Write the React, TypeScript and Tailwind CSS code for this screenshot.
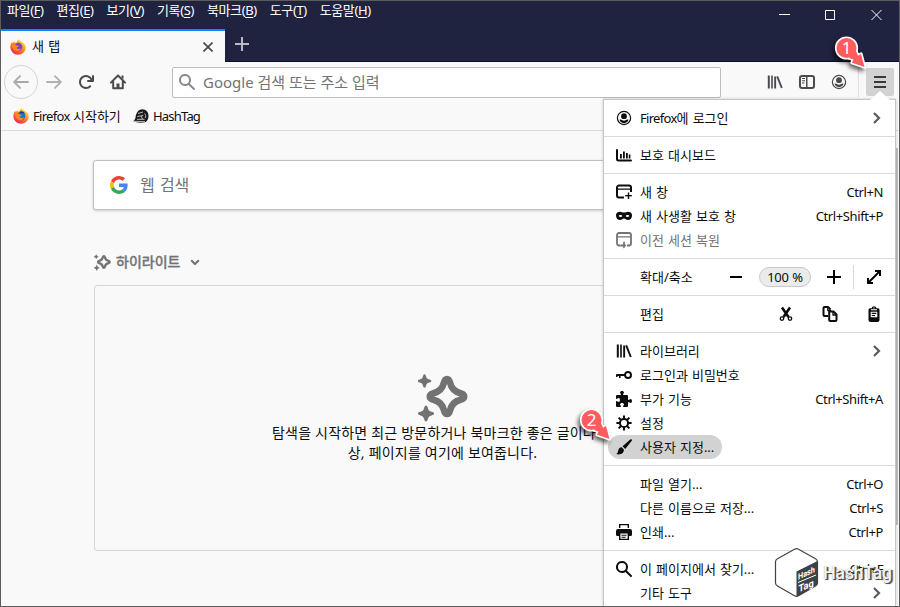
import type { ReactNode } from "react";
import clsx from "clsx";

function Icon({ children, className, size = 16, box = 16 }: { children: ReactNode; className?: string; size?: number; box?: number }) {
  return (
    <svg width={size} height={size} viewBox={`0 0 ${box} ${box}`} fill="currentColor" className={clsx("shrink-0 overflow-visible", className)}>
      {children}
    </svg>
  );
}

const arrow =
  "M15 7.1H3.4l4.3-4.4A.9.9 0 0 0 6.4 1.4l-6 6a.9.9 0 0 0 0 1.2l6 6a.9.9 0 0 0 1.3-1.3L3.4 8.9H15a.9.9 0 0 0 0-1.8z";

const library = (
  <>
    <path d="M.8 1.5h2v13h-2zM4.2 1.5h1.6v13H4.2zM7.2 2.5h1.9v12H7.2z" />
    <path d="M10.2 2.3 14.8 14" stroke="currentColor" strokeWidth="1.9" />
  </>
);

const account = (
  <>
    <circle cx="8" cy="8" r="6.6" fill="none" stroke="currentColor" strokeWidth="1.2" />
    <circle cx="8" cy="6.2" r="2.9" />
    <path d="M3.5 9.6h1.6C6 11 10 11 10.9 9.6h1.6c-.3 2-2 3.6-4.5 3.6S3.8 11.600 3.5 9.6z" />
  </>
);

const search = (
  <path d="M15.707 14.293l-4.822-4.822a6.019 6.019 0 1 0-1.414 1.414l4.822 4.822a1 1 0 0 0 1.414-1.414zM6 10a4 4 0 1 1 4-4 4 4 0 0 1-4 4z" />
);

const chart = (
  <>
    <path d="M1 3V12a1.500 1.500 0 0 0 1.500 1.500H15" fill="none" stroke="currentColor" strokeWidth="2" strokeLinecap="round" />
    <path d="M4 7h1.800v4.500H4zM7 4.500h1.800v7H7zM10 6h1.800v5.500H10zM12.800 7.500h1.600v4h-1.600z" />
  </>
);

const newWindow = (
  <>
    <path d="M8 13.500H3A2 2 0 0 1 1 11.500V3.500a2 2 0 0 1 2-2h10a2 2 0 0 1 2 2V8" fill="none" stroke="currentColor" strokeWidth="2" />
    <path d="M1 4.500h14v1.300H1zM11.800 8.500h1.400v6.500h-1.400z" />
    <path d="M9.200 11h6.600v1.400H9.200z" />
  </>
);

const mask = (
  <path
    fillRule="evenodd"
    d="M4 3.800c1.600 0 2.600.8 4 .8s2.400-.8 4-.8c2.500 0 4 1.100 4 3.700 0 2.500-1.500 4.500-4 4.500-2 0-2.800-1.600-4-1.600S6 12 4 12c-2.500 0-4-2-4-4.500 0-2.600 1.500-3.700 4-3.700zm.5 3.100c-1.100 0-1.700.5-1.900 1.100.5.6 1.200 1 2 1S6 8.600 6.400 8c-.4-.6-1-1.100-1.900-1.100zm7 0c-.9 0-1.500.5-1.900 1.100.4.6 1 1 1.800 1s1.500-.4 2-1c-.2-.6-.8-1.100-1.900-1.100z"
  />
);

const restore = (
  <>
    <path d="M4.500 13.500H3A2 2 0 0 1 1 11.500V3a2 2 0 0 1 2-2h10a2 2 0 0 1 2 2v8.500a2 2 0 0 1-2 2h-2" fill="none" stroke="currentColor" strokeWidth="1.800" />
    <path d="M1 4.300h14v1.200H1zM7.300 9.500h1.500v6H7.300z" />
    <path d="M4.500 12.500h2.800v-2l3 3-3 3v-2H4.500z" />
  </>
);

const key = (
  <path
    fillRule="evenodd"
    d="M12 4a4 4 0 0 0-3.900 3H1a1 1 0 0 0-1 1v2h1.500V9H3v2h1.600V9H8.100A4 4 0 1 0 12 4zm0 2a2 2 0 1 1 0 4 2 2 0 0 1 0-4z"
  />
);

const addons = (
  <path d="M14.5 8c-.971 0-1 1-1.75 1a.765.765 0 0 1-.75-.75V5a1 1 0 0 0-1-1H7.75A.765.765 0 0 1 7 3.25c0-.75 1-.779 1-1.75C8 .635 7.1 0 6 0S4 .635 4 1.5c0 .971 1 1 1 1.75a.765.765 0 0 1-.75.75H1a1 1 0 0 0-1 1v2.250A.765.765 0 0 0 .75 8c.75 0 .779-1 1.75-1C3.365 7 4 7.9 4 9s-.635 2-1.5 2c-.971 0-1-1-1.75-1a.765.765 0 0 0-.75.75V15a1 1 0 0 0 1 1h3.250a.765.765 0 0 0 .75-.75c0-.75-1-.779-1-1.75 0-.865.9-1.5 2-1.5s2 .635 2 1.5c0 .971-1 1-1 1.75a.765.765 0 0 0 .75.75H11a1 1 0 0 0 1-1v-3.250a.765.765 0 0 1 .75-.75c.75 0 .779 1 1.75 1 .865 0 1.5-.9 1.5-2s-.635-2-1.5-2z" />
);

const gear = (
  <>
    <circle cx="8" cy="8" r="4.1" fill="none" stroke="currentColor" strokeWidth="2" />
    <path
      d="M8 .4v3M8 12.6v3M.4 8h3M12.6 8h3M2.6 2.6l2.2 2.2M11.2 11.2l2.2 2.2M2.6 13.4l2.2-2.2M11.2 4.8l2.2-2.2"
      stroke="currentColor"
      strokeWidth="2"
    />
  </>
);

const brush = (
  <>
    <path d="M15.7.4c.5.5.3 1.1-.1 1.6L9.2 9.9 6.6 7.3 14.2.6c.5-.4 1.1-.6 1.5-.2z" />
    <path d="M5.7 8.300l2.3 2.4c-.3 2.3-1.3 4.3-4.2 4.6-1.5.2-2.8 0-3.6-.3 1.3-.6 1.5-1.5 1.9-3.1C2.5 9.8 3.7 8.300 5.7 8.300z" />
  </>
);

const printer = (
  <path
    fillRule="evenodd"
    d="M3 0h10v4H3zm1.400 1.300v2.700h7.200V1.300zM2 5h12a2 2 0 0 1 2 2v3.500a1.500 1.500 0 0 1-1.500 1.500H13v4H3v-4H1.500A1.500 1.500 0 0 1 0 10.500V7a2 2 0 0 1 2-2zm2.400 4.500v5.200h7.200V9.500zM5.500 10.800h5v1h-5zm0 2h4v1h-4z"
  />
);

const cut = (
  <>
    <path d="M4 1.500 10.500 11M12 1.500 5.500 11" stroke="currentColor" strokeWidth="2.600" />
    <circle cx="4" cy="12.600" r="1.700" fill="none" stroke="currentColor" strokeWidth="1.300" />
    <circle cx="12" cy="12.600" r="1.700" fill="none" stroke="currentColor" strokeWidth="1.300" />
  </>
);

const copy = (
  <g fill="none" stroke="currentColor" strokeWidth="2" strokeLinejoin="round">
    <path d="M6 10H2.500A1 1 0 0 1 1.500 9V2a1 1 0 0 1 1-1H6l2.500 2.500" />
    <path d="M5.800 1v3.500H9" strokeWidth="1.300" />
    <path d="M7.200 6v8a1 1 0 0 0 1 1h5.300a1 1 0 0 0 1-1V8.500L11.500 5.500H7.200z" />
    <path d="M11 5.500v3.500h3.500" strokeWidth="1.300" />
  </g>
);

const paste = (
  <path
    fillRule="evenodd"
    d="M4 2.200h1.500A2.700 2.700 0 0 1 8 .3a2.700 2.700 0 0 1 2.500 1.900H12a1.500 1.500 0 0 1 1.500 1.500V14a2 2 0 0 1-2 2h-7a2 2 0 0 1-2-2V3.700A1.500 1.500 0 0 1 4 2.200zM7.400 1.600v1h1.200v-1zM5 3.300v.9h6v-.9zM4.700 5.800v5.400h6.600V5.800zM5.700 6.700h4.600v1.200H5.700zm0 2.200H9v1.200H5.700z"
  />
);

function Chevron() {
  return (
    <svg width="10" height="14" viewBox="0 0 10 14" fill="none" stroke="#5b5b5b" strokeWidth="2.200">
      <path d="M2 2l5 5-5 5" />
    </svg>
  );
}

function FirefoxLogo({ id, deep }: { id: string; deep?: boolean }) {
  return (
    <svg width="16" height="16" viewBox="0 0 16 16" className="shrink-0">
      <defs>
        <linearGradient id={id} x1=".85" y1=".1" x2=".25" y2="1">
          <stop offset="0" stopColor="#ffe226" />
          <stop offset=".4" stopColor="#ff9a1f" />
          <stop offset=".75" stopColor="#ff4b3a" />
          <stop offset="1" stopColor="#f0186b" />
        </linearGradient>
      </defs>
      <path d="M8.6.2c.5 1.2 1.4 1.7 2.8 2.5C14 4.2 15.8 6 15.7 8.8c-.2 4-3.5 7-7.5 7C4 15.8.6 12.7.4 8.6.3 6.3 1 4.3 2.200 2.700l.5 1.500 1.600-1.900.5 1.300 1.700.2C6.700 2.600 7.400 1.200 8.600.2z" fill={`url(#${id})`} />
      <circle cx="8.200" cy="8" r="4.200" fill={deep ? "#1272d6" : "#7b3fd8"} />
      <path d="M2 6.200c1.500-1 3.500-.8 4.700.2.9.2 1.700.1 2.200.6-.6 1.200-2 1-2.400 2 .9 1.200 3.200 1.200 4.500.2-.6 2.200-2.600 3.200-4.600 2.800C3.800 11.500 2 9.300 2 6.200z" fill="#ff8a1c" />
      {deep && <path d="M6 4c1.700-1.300 5-.6 5.900 1.700-1.500-.8-2.600-.6-3.600-.2z" fill="#1c3f94" />}
    </svg>
  );
}

function Sparkles({ size }: { size: number }) {
  return (
    <svg width={size} height={size} viewBox="0 0 50 50" fill="currentColor" className="shrink-0">
      <path d="M6.500 1.200c.9 0 1.200.7 1.500 2 .5 2 1.300 2.800 3.300 3.300 1.300.3 2 .6 2 1.500s-.7 1.200-2 1.500c-2 .5-2.800 1.300-3.300 3.300-.3 1.300-.6 2-1.500 2s-1.200-.7-1.500-2C4.500 10.800 3.700 10 1.700 9.500.4 9.200-.3 8.900-.3 8s.7-1.200 2-1.500c2-.5 2.800-1.300 3.300-3.300.3-1.300.6-2 1.500-2z" />
      <path d="M8 32.500c1 0 1.500.9 1.900 2.500.6 2.400 1.300 3.100 3.700 3.700 1.600.4 2.500.8 2.500 1.800s-.9 1.500-2.500 1.900c-2.400.6-3.100 1.300-3.700 3.700C9.500 47.700 9 48.600 8 48.600s-1.500-.9-1.900-2.500c-.6-2.400-1.300-3.100-3.700-3.700C.8 42-.1 41.500-.1 40.500s.9-1.400 2.500-1.800c2.400-.6 3.100-1.300 3.700-3.700.4-1.600.9-2.500 1.900-2.500z" />
      <path
        d="M29 6c1.800 0 2.500 1.500 3 3.500 1.300 5.800 4.500 9.200 10.500 10.700 2.300.6 3.700 1.500 3.700 3.300s-1.400 2.700-3.700 3.300C36.500 28.300 33.300 31.700 32 37.500c-.5 2-1.200 3.500-3 3.500s-2.500-1.500-3-3.500C24.700 31.700 21.500 28.300 15.500 26.800c-2.300-.6-3.700-1.500-3.700-3.300s1.400-2.700 3.700-3.300C21.500 18.700 24.700 15.300 26 9.500c.5-2 1.200-3.500 3-3.500z"
        fill="none"
        stroke="currentColor"
        strokeWidth="6.600"
      />
    </svg>
  );
}

function Pointer({ n, className }: { n: number; className: string }) {
  return (
    <div className={clsx("absolute h-9 w-9", className)}>
      <svg width="36" height="36" viewBox="0 0 36 36" className="absolute inset-0 overflow-visible drop-shadow-[-2px_3px_2px_rgba(0,0,0,0.6)]">
        <g stroke="#fff" strokeWidth="3.200" strokeLinejoin="round" fill="#fff">
          <circle cx="12.500" cy="12" r="10" />
          <path d="M15 22l4.500 1.500-1.500 3.200L30.500 31 27 18l-3 1.800L21.500 14z" />
        </g>
        <g fill="#ff5c60">
          <circle cx="12.500" cy="12" r="10" />
          <path d="M15 22l4.500 1.500-1.500 3.200L30.500 31 27 18l-3 1.800L21.500 14z" />
        </g>
      </svg>
      <span className="absolute left-0 top-0 w-[25px] text-center text-[17px] leading-6 text-white">{n}</span>
    </div>
  );
}

const menuBar = [
  ["파일", "F"],
  ["편집", "E"],
  ["보기", "V"],
  ["기록", "S"],
  ["북마크", "B"],
  ["도구", "T"],
  ["도움말", "H"],
];

function TitleBar() {
  return (
    <header className="flex h-[61px] shrink-0 flex-col border-b border-[#0d0e26] bg-[#202340] text-white">
      <div className="flex h-[29px] items-start justify-between">
        <div className="flex gap-[13px] pl-1.5 text-[13px] leading-[18px] tracking-[-0.4px]">
          {menuBar.map(([label, k]) => (
            <span key={k} className="whitespace-nowrap">
              {label}(<span className="underline underline-offset-2">{k}</span>)
            </span>
          ))}
        </div>
        <div className="flex items-center gap-[35px] pr-[17px] pt-2">
          <svg width="11" height="12" viewBox="0 0 11 12"><path d="M0 5.500h11" stroke="#fff" /></svg>
          <svg width="11" height="12" viewBox="0 0 11 12"><path d="M.5 1.500h9v9h-9z" stroke="#fff" fill="none" /></svg>
          <svg width="11" height="12" viewBox="0 0 11 12"><path d="M.5 1l10 10M10.500 1l-10 10" stroke="#fff" /></svg>
        </div>
      </div>
      <div className="flex h-8">
        <div className="-mb-px flex h-[33px] w-[224px] items-center border-t-2 border-[#0a84ff] bg-[#f9f9fa] pl-[9px] pr-3 text-[13px] text-[#0c0c0d]">
          <FirefoxLogo id="ff-tab" />
          <span className="ml-[6px] [word-spacing:1px]">새 탭</span>
          <svg width="10" height="10" viewBox="0 0 10 10" className="ml-auto" stroke="#4a4a4f" strokeWidth="1.700">
            <path d="M.5.5l9 9M9.500.5l-9 9" />
          </svg>
        </div>
        <svg width="14" height="14" viewBox="0 0 14 14" className="ml-[10px] mt-2" stroke="#b9bac4" strokeWidth="2">
          <path d="M7 0v14M0 7h14" />
        </svg>
      </div>
    </header>
  );
}

function NavBar() {
  return (
    <div className="flex h-10 shrink-0 items-center text-[#4a4a4f]">
      <div className="ml-[3px] flex size-[34px] items-center justify-center rounded-full border border-[#d4d4d5] text-[#a9a9ab]">
        <Icon><path d={arrow} /></Icon>
      </div>
      <Icon className="ml-2 rotate-180 text-[#b1b1b3]"><path d={arrow} /></Icon>
      <Icon className="ml-4">
        <path d="M15 1a1 1 0 0 0-1 1v2.418A6.995 6.995 0 1 0 8 15a6.954 6.954 0 0 0 4.950-2.050 1 1 0 0 0-1.414-1.414A5.019 5.019 0 1 1 12.549 6H10a1 1 0 0 0 0 2h5a1 1 0 0 0 1-1V2a1 1 0 0 0-1-1z" />
      </Icon>
      <Icon className="ml-4">
        <path d="M.9 8.600 8 1.500l7.100 7.100M3.200 7.500V14.200h9.600V7.500" fill="none" stroke="currentColor" strokeWidth="2" strokeLinecap="round" strokeLinejoin="round" />
        <path d="M11.500 1.500h2v4l-2-2zM6.500 9.500h3V14h-3z" />
      </Icon>
      <div className="ml-[46px] flex h-[31px] w-[549px] items-center rounded-[2px] border border-[#bdbdbe] bg-white pl-1.5 text-[#737373]">
        <Icon className="text-[#8a8a8c]">{search}</Icon>
        <span className="ml-2 text-[15px] leading-5">Google 검색 또는 주소 입력</span>
      </div>
      <Icon className="ml-[46px]">{library}</Icon>
      <Icon className="ml-4">
        <rect x="1" y="1.900" width="14" height="12.200" rx="2" fill="none" stroke="currentColor" strokeWidth="2" />
        <path d="M7 2h1.500v12H7zM3 4h3v1H3zM3 6.200h3v1H3zM3 8.400h2.500v1H3z" />
      </Icon>
      <Icon className="ml-4">{account}</Icon>
      <div className="ml-[11px] h-[30px] w-px bg-[#dedee0]" />
      <div className="ml-[7px] flex h-7 w-7 items-center justify-center rounded-[2px] bg-[#d2d2d3]">
        <svg width="12" height="12" viewBox="0 0 12 12"><path d="M0 1h12M0 6h12M0 11h12" stroke="#38383d" strokeWidth="2" /></svg>
      </div>
    </div>
  );
}

function BookmarksBar() {
  return (
    <div className="flex h-[29px] shrink-0 items-center border-b border-[#dcdcdd] pl-3 text-[13px] leading-5 text-[#0c0c0d]">
      <FirefoxLogo id="ff-bookmark" deep />
      <span className="ml-1 w-[97px] whitespace-nowrap"><span className="tracking-[-0.7px]">Firefox</span> 시작하기</span>
      <svg width="16" height="16" viewBox="0 0 16 16" className="ml-[3px]">
        <path d="M.3 13.200c1-1 1.700-1.800 2.200-3.500C3 5.500 5 1.300 9.300 1.300c4 0 6.200 3 6.200 6.700 0 3-1.300 4.700-2.700 6C9 15.200 3 14.700.3 13.200z" fill="#1c1c1c" />
        <path d="M5 5.500l5-1.500M4.300 8.500l6-1M4 11.300h7.500M8 8l1.500 3M11.500 5.500c1.300.8 1.500 3 .7 4.500M1 13.300l11 .4" stroke="#cfcfcf" strokeWidth=".9" fill="none" />
      </svg>
      <span className="ml-1 tracking-[-0.8px]">HashTag</span>
    </div>
  );
}

function NewTabPage() {
  return (
    <main className="relative min-h-0 flex-1 overflow-hidden pl-[92px] pt-[29px]">
      <div className="flex h-[50px] w-[699px] items-center rounded-[3px] border border-[#c0c0c1] bg-white pl-4 shadow-[0_1px_3px_rgba(0,0,0,0.18)]">
        <svg width="18" height="18" viewBox="0 0 48 48" className="shrink-0">
          <path fill="#EA4335" d="M24 9.500c3.540 0 6.710 1.220 9.210 3.600l6.850-6.850C35.900 2.380 30.470 0 24 0 14.620 0 6.510 5.380 2.560 13.220l7.980 6.190C12.430 13.720 17.740 9.500 24 9.500z" />
          <path fill="#4285F4" d="M46.980 24.550c0-1.570-.15-3.090-.38-4.550H24v9.020h12.940c-.58 2.960-2.260 5.480-4.780 7.180l7.730 6c4.510-4.180 7.090-10.360 7.090-17.650z" />
          <path fill="#FBBC05" d="M10.530 28.590c-.48-1.450-.76-2.990-.76-4.590s.27-3.140.76-4.590l-7.980-6.190C.92 16.460 0 20.120 0 24c0 3.880.92 7.540 2.560 10.780l7.970-6.190z" />
          <path fill="#34A853" d="M24 48c6.480 0 11.930-2.130 15.890-5.810l-7.730-6c-2.150 1.450-4.920 2.300-8.160 2.300-6.260 0-11.570-4.220-13.470-9.910l-7.980 6.190C6.510 42.620 14.620 48 24 48z" />
        </svg>
        <span className="ml-3 text-[16px] leading-6 text-[#737373] [word-spacing:1px]">웹 검색</span>
      </div>
      <div className="mt-[44px] flex h-4 items-center pl-px text-[#737373]">
        <Sparkles size={17} />
        <span className="ml-[5px] text-[14px] font-medium leading-4 [-webkit-text-stroke:0.3px]">하이라이트</span>
        <svg width="10" height="7" viewBox="0 0 10 7" className="ml-[10px]" fill="none" stroke="currentColor" strokeWidth="2">
          <path d="M1.200 1.200 5 5l3.800-3.800" />
        </svg>
      </div>
      <div className="ml-px mt-[15px] flex h-[266px] w-[697px] flex-col items-center rounded-[3px] border border-[#d7d7db] pt-[87px] text-[#737373]">
        <Sparkles size={50} />
        <div className="w-[341px] whitespace-nowrap text-[14px] leading-5 tracking-[0.2px] text-[#0c0c0d]">
          <p>탐색을 시작하면 최근 방문하거나 북마크한 좋은 글이나</p>
          <p className="text-center">상, 페이지를 여기에 보여줍니다.</p>
        </div>
      </div>
    </main>
  );
}

type Item = { label: string; icon?: ReactNode; hint?: string; more?: boolean; disabled?: boolean; active?: boolean };

function MenuItem({ label, icon, hint, more, disabled, active }: Item) {
  return (
    <div className={clsx("flex h-6 items-center pl-3", more ? "pr-[13px]" : "pr-3", disabled && "text-[#737373]")}>
      <div className={clsx("flex h-6 items-center whitespace-nowrap", active && "-ml-2 rounded-full bg-[#d2d2d3] pl-2 pr-2")}>
        <span className="mr-2 flex size-4">{icon && <Icon>{icon}</Icon>}</span>
        {label}
      </div>
      <span className="ml-auto whitespace-nowrap tracking-[-0.4px]">{hint}</span>
      {more && <Chevron />}
    </div>
  );
}

function Section({ items, children }: { items?: Item[]; children?: ReactNode }) {
  return (
    <div className="border-b border-[#d9d9db] py-1.5">
      {items?.map((it) => <MenuItem key={it.label} {...it} />)}
      {children}
    </div>
  );
}

function AppMenu() {
  return (
    <div className="absolute left-[603px] top-[99px] h-[507px] w-[293px] border border-b-0 border-[#c6c6c7] bg-white text-[13px] leading-5 text-[#0c0c0d] shadow-[0_0_3px_rgba(0,0,0,0.2)] [word-spacing:0.7px]">
      <svg width="20" height="10" viewBox="0 0 20 10" className="absolute -top-[9px] left-[266px]">
        <path d="M0 9 10 0l10 9v1H0z" fill="#fff" />
      </svg>
      <div className="border-b border-[#d9d9db] py-1.5">
        <div className="flex h-6 items-center pl-3 pr-[13px]">
          <Icon>{account}</Icon>
          <span className="ml-2"><span className="tracking-[-0.7px]">Firefox</span>에 로그인</span>
          <span className="ml-auto"><Chevron /></span>
        </div>
      </div>
      <Section items={[{ label: "보호 대시보드", icon: chart }]} />
      <Section
        items={[
          { label: "새 창", icon: newWindow, hint: "Ctrl+N" },
          { label: "새 사생활 보호 창", icon: mask, hint: "Ctrl+Shift+P" },
          { label: "이전 세션 복원", icon: restore, disabled: true },
        ]}
      />
      <Section>
        <div className="flex h-6 items-center pl-9">
          <span className="w-[90px]">확대/축소</span>
          <span className="h-0.5 w-3 bg-black" />
          <span className="ml-[17px] flex h-5 w-[52px] items-center justify-center rounded-full border border-[#c9c9ca] bg-[#ebebeb] tracking-[-0.3px]">100 %</span>
          <svg width="14" height="14" viewBox="0 0 14 14" className="ml-4"><path d="M7 0v14M0 7h14" stroke="#000" strokeWidth="2" /></svg>
          <span className="ml-3 h-6 w-px bg-[#d9d9db]" />
          <svg width="14" height="14" viewBox="0 0 14 14" className="ml-[13px]">
            <path d="M2 12 12 2M8 1.100h5V6M1 8v4.900h5" stroke="#000" strokeWidth="2" fill="none" />
          </svg>
        </div>
      </Section>
      <Section>
        <div className="flex h-6 items-center pl-9 pr-[13px]">
          <span>편집</span>
          <div className="ml-auto flex gap-7">
            <Icon>{cut}</Icon>
            <Icon>{copy}</Icon>
            <Icon>{paste}</Icon>
          </div>
        </div>
      </Section>
      <Section
        items={[
          { label: "라이브러리", icon: library, more: true },
          { label: "로그인과 비밀번호", icon: key },
          { label: "부가 기능", icon: addons, hint: "Ctrl+Shift+A" },
          { label: "설정", icon: gear },
          { label: "사용자 지정...", icon: brush, active: true },
        ]}
      />
      <Section
        items={[
          { label: "파일 열기...", hint: "Ctrl+O" },
          { label: "다른 이름으로 저장...", hint: "Ctrl+S" },
          { label: "인쇄...", icon: printer, hint: "Ctrl+P" },
        ]}
      />
      <div className="pt-1.5">
        <MenuItem label="이 페이지에서 찾기..." icon={search} hint="Ctrl+F" />
        <MenuItem label="기타 도구" more />
      </div>
    </div>
  );
}

function Watermark() {
  return (
    <div className="absolute left-[774px] top-[547px] flex h-[51px] w-[118px] items-center">
      <svg width="46" height="51" viewBox="0 0 46 51" className="shrink-0">
        <path d="M20.500 2.200a4 4 0 0 1 4 0l17 9.500a3.500 3.500 0 0 1 2 3V36a3.500 3.500 0 0 1-2 3l-17 9.800a4 4 0 0 1-4 0L3.500 39a3.500 3.500 0 0 1-2-3V14.700a3.500 3.500 0 0 1 2-3z" fill="#fff" stroke="#3c4446" strokeWidth="1.200" />
        <path d="M22.500 24.500 43.500 14v22a3.500 3.500 0 0 1-2 3l-17 9.800-2 .7z" fill="#3a4346" />
        <path d="M24 35.500 42 28" stroke="#fff" />
        <g fill="#fff" fontFamily="Roboto, sans-serif" fontWeight="700" fontSize="8.500">
          <text transform="matrix(.86 -.4 0 1 24 33)">Hash</text>
          <text transform="matrix(.92 -.4 0 1 24.500 45.500)" fontSize="10">Tag</text>
        </g>
      </svg>
      <span className="ml-[3px] font-['Roboto'] text-[18px] font-medium leading-6 tracking-[-0.4px] text-[#f4f4f4] [text-shadow:1px_1px_0_#4a4f50,2px_1px_1px_#5a5f60,0_0_1px_#999]">HashTag</span>
    </div>
  );
}

export default function App() {
  return (
    <div className="relative flex h-[607px] w-[900px] flex-col overflow-hidden border border-[#5c5c5c] bg-[#f9f9fa] font-['Noto_Sans','Noto_Sans_CJK_KR',sans-serif]">
      <TitleBar />
      <NavBar />
      <BookmarksBar />
      <NewTabPage />
      {/* page scrollbar, mostly hidden by the menu */}
      <div className="absolute right-px top-[147px] h-[377px] w-2 bg-[#c1c1c2]" />
      <div className="absolute -left-px -top-px">
        <AppMenu />
        <Watermark />
        <Pointer n={1} className="left-[834px] top-[36px]" />
        <Pointer n={2} className="left-[579px] top-[408px]" />
      </div>
    </div>
  );
}
